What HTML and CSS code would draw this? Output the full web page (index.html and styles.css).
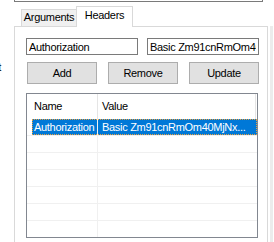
FILE: index.html
```html
<!DOCTYPE HTML>
<html>
<head>
    <meta charset="utf-8">
    <title>Headers</title>
    <link rel="stylesheet" href="styles.css">
</head>
<body>
    <div class="top-edge"></div>
    <div class="frame">
        <div class="side"><span class="side-label">Text</span></div>
        <div class="tabctl">
            <div class="tabstrip">
                <div class="tab">Arguments</div>
                <div class="tab active">Headers</div>
            </div>
            <div class="panel">
                <div class="fields">
                    <input class="field" type="text" value="Authorization">
                    <input class="field" type="text" value="Basic Zm91cnRmOm40MjNxYWxhY2U=">
                </div>
                <div class="buttons">
                    <button class="btn">Add</button>
                    <button class="btn">Remove</button>
                    <button class="btn">Update</button>
                </div>
                <div class="listview">
                    <div class="lv-head">
                        <span class="c1">Name</span>
                        <span class="c2">Value</span>
                    </div>
                    <div class="lv-row">
                        <div class="sel">
                            <span class="c1">Authorization</span>
                            <span class="c2">Basic Zm91cnRmOm40MjNx...</span>
                        </div>
                    </div>
                    <div class="lv-row"><span class="c1"></span><span class="c2"></span></div>
                    <div class="lv-row"><span class="c1"></span><span class="c2"></span></div>
                    <div class="lv-row"><span class="c1"></span><span class="c2"></span></div>
                    <div class="lv-row"><span class="c1"></span><span class="c2"></span></div>
                    <div class="lv-row"><span class="c1"></span><span class="c2"></span></div>
                    <div class="lv-row"><span class="c1"></span><span class="c2"></span></div>
                </div>
            </div>
        </div>
        <div class="edge"></div>
    </div>
</body>
</html>
```

FILE: styles.css
```css
body {
    margin: 0;
    width: 274px;
    height: 242px;
    overflow: hidden;
    background: #fff;
    font-family: "Liberation Sans", Arial, sans-serif;
    font-size: 11px;
    letter-spacing: -0.3px;
    color: #000;
}

.top-edge {
    margin-left: 14px;
    width: 247px;
    height: 1px;
    border: 1px solid #7a7a7a;
    border-top: none;
}

.frame {
    display: flex;
}

.side {
    width: 14px;
    overflow: hidden;
    padding-top: 59px;
    white-space: nowrap;
}

    .side .side-label {
        display: block;
        margin-left: -18px;
    }

.tabctl {
    width: 254px;
}

.tabstrip {
    display: flex;
    align-items: flex-end;
    height: 20px;
    margin-top: 4px;
    padding-left: 7px;
}

    .tabstrip .tab {
        box-sizing: border-box;
        width: 56px;
        height: 17px;
        line-height: 15px;
        text-align: center;
        background: #f0f0f0;
        border: 1px solid #d9d9d9;
        border-bottom: none;
    }

    .tabstrip .tab.active {
        position: relative;
        z-index: 1;
        width: 57px;
        height: 21px;
        line-height: 16px;
        margin-left: -1px;
        margin-bottom: -1px;
        background: #fff;
    }

.panel {
    box-sizing: border-box;
    height: 216px;
    border: 1px solid #d9d9d9;
    border-bottom: none;
    padding: 11px 0 0 11px;
}

.fields {
    display: flex;
    gap: 9px;
}

    .fields .field {
        box-sizing: border-box;
        width: 112px;
        height: 17px;
        margin: 0;
        padding: 0 2px;
        border: 1px solid #7a7a7a;
        font: inherit;
        letter-spacing: inherit;
        color: #000;
        outline: none;
    }

.buttons {
    display: flex;
    gap: 11px;
    margin: 7px 0 0 1px;
}

    .buttons .btn {
        box-sizing: border-box;
        width: 70px;
        height: 22px;
        margin: 0;
        padding: 0;
        background: #e1e1e1;
        border: 1px solid #adadad;
        font: inherit;
        letter-spacing: inherit;
        color: #000;
    }

.listview {
    box-sizing: border-box;
    width: 232px;
    height: 145px;
    margin-top: 9px;
    border: 1px solid #828790;
    overflow: hidden;
}

    .listview .c1 {
        box-sizing: border-box;
        width: 71px;
        padding-left: 7px;
        border-right: 1px solid #f0f0f0;
        white-space: nowrap;
        overflow: hidden;
    }

    .listview .c2 {
        flex: 1;
        padding-left: 4px;
        white-space: nowrap;
        overflow: hidden;
    }

.lv-head {
    display: flex;
    height: 25px;
    line-height: 25px;
    margin-right: 1px;
    border-right: 1px solid #e5e5e5;
}

    .lv-head .c1 {
        border-right-color: #e5e5e5;
    }

.lv-row {
    box-sizing: border-box;
    display: flex;
    height: 17px;
    line-height: 16px;
    border-bottom: 1px solid #f0f0f0;
}

    .lv-row .sel {
        display: flex;
        flex: 1;
        margin-left: 5px;
        background: #0078d7;
        color: #fff;
        outline: 1px dotted #e8a040;
        outline-offset: -1px;
    }

        .lv-row .sel .c1 {
            width: 66px;
            padding-left: 2px;
        }

.edge {
    width: 3px;
    height: 216px;
    margin: 24px 0 0 2px;
    background: #ececec;
}
```
